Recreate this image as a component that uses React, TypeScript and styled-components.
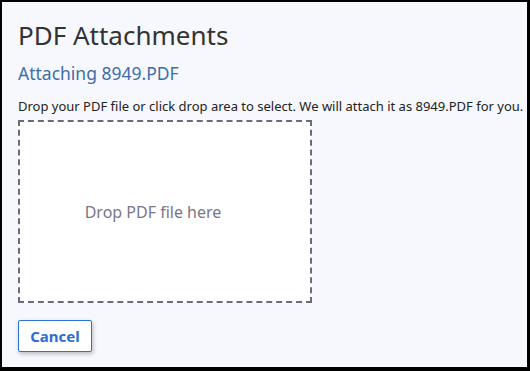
import styled, { createGlobalStyle } from "styled-components";

const GlobalStyle = createGlobalStyle`
  html, body {
    margin: 0;
    padding: 0;
    background: #000;
  }
  body {
    font-family: "Segoe UI", "Noto Sans", "Open Sans", sans-serif;
  }
`;

const Frame = styled.div`
  box-sizing: border-box;
  width: 530px;
  height: 371px;
  background: #000;
  padding: 2px 3px 4px 2px;
`;

const Dialog = styled.div`
  box-sizing: border-box;
  height: 100%;
  background: #f7f8fd;
  padding: 16px 16px 0 16px;
  display: flex;
  flex-direction: column;
  align-items: flex-start;
`;

const Title = styled.h1`
  margin: 0;
  font-size: 26px;
  font-weight: 400;
  color: #333;
  line-height: 34px;
`;

const Subtitle = styled.h2`
  margin: 10px 0 0;
  font-size: 17.5px;
  font-weight: 400;
  color: #3e6ea8;
  line-height: 22px;
`;

const Hint = styled.p`
  margin: 14px 0 0;
  font-size: 13px;
  color: #222;
  line-height: 17px;
  white-space: nowrap;
`;

const DropArea = styled.div`
  box-sizing: border-box;
  margin-top: 5px;
  width: 294px;
  height: 183px;
  padding-right: 24px;
  background: #fff;
  border: 2px dashed #6c6a7c;
  display: flex;
  align-items: center;
  justify-content: center;
  font-size: 16px;
  color: #7b7587;
  cursor: pointer;
`;

const Button = styled.button`
  box-sizing: border-box;
  margin-top: 17px;
  width: 74px;
  height: 32px;
  background: #fff;
  border: 1px solid #2a73d5;
  border-radius: 2px;
  box-shadow: 1px 2px 4px rgba(0, 0, 0, 0.25);
  font-family: inherit;
  font-size: 15px;
  font-weight: 700;
  color: #2b6dd4;
  cursor: pointer;
`;

export default function App() {
  return (
    <>
      <GlobalStyle />
      <Frame>
        <Dialog>
          <Title>PDF Attachments</Title>
          <Subtitle>Attaching 8949.PDF</Subtitle>
          <Hint>
            Drop your PDF file or click drop area to select. We will attach it as 8949.PDF for you.
          </Hint>
          <DropArea>Drop PDF file here</DropArea>
          <Button>Cancel</Button>
        </Dialog>
      </Frame>
    </>
  );
}
